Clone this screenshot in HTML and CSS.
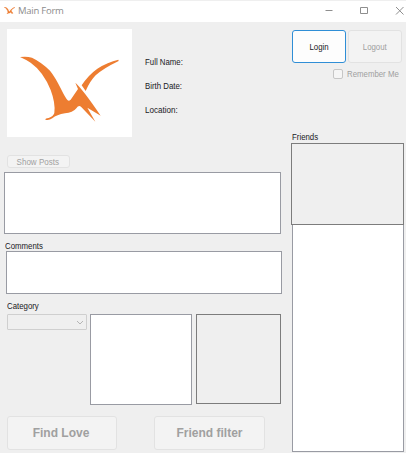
FILE: index.html
```
<!DOCTYPE html>
<html lang="en">
<head>
<meta charset="utf-8">
<title>Main Form</title>
<link rel="stylesheet" href="styles.css">
</head>
<body>
<header class="titlebar">
  <svg class="app-icon" viewBox="58 168 300 200" preserveAspectRatio="none"><path d="M60 171Q80 168 96 173Q125 187 150 212Q166 232 182 265Q196 294 203 301Q207 304 212 299L234 267L226 248Q250 270 302 347L262 323L286 365L243 320Q236 314 229 325Q218 339 195 340Q170 344 157 355Q146 363 136 359Q136 355 146 354Q160 349 163 339Q167 310 152 270Q130 215 92 188Q76 178 60 171ZM245 256Q265 225 292 206Q323 186 355 179L356 183Q310 205 287 226Q270 243 257 273Z"/></svg>
  <h1>Main Form</h1>
  <svg class="controls" viewBox="0 0 82 18"><path d="M2.500 7.500H9.500M37.500 4.500H44.500V10.500H37.500ZM73 4L80.500 11.500M80.500 4L73 11.500"/></svg>
</header>
<main class="form">
  <section class="left">
    <div class="profile">
      <div class="photo"><svg viewBox="21 87 375 324"><path d="M60 171Q80 168 96 173Q125 187 150 212Q166 232 182 265Q196 294 203 301Q207 304 212 299L234 267L226 248Q250 270 302 347L262 323L286 365L243 320Q236 314 229 325Q218 339 195 340Q170 344 157 355Q146 363 136 359Q136 355 146 354Q160 349 163 339Q167 310 152 270Q130 215 92 188Q76 178 60 171ZM245 256Q265 225 292 206Q323 186 355 179L356 183Q310 205 287 226Q270 243 257 273Z"/></svg></div>
      <div class="details"><span class="t">Full Name:</span><span class="t">Birth Date:</span><span class="t">Location:</span></div>
    </div>
    <button class="btn show" disabled><span class="t">Show Posts</span></button>
    <div class="list posts"></div>
    <label class="comments-label"><span class="t">Comments</span></label>
    <div class="list comments"></div>
    <label class="category-label"><span class="t">Category</span></label>
    <div class="category">
      <div class="combo"><svg viewBox="0 0 8 5"><path d="M1 1L4 4L7 1"/></svg></div>
      <div class="list items"></div>
      <div class="picture item-picture"></div>
    </div>
    <div class="actions"><button class="btn big" disabled>Find Love</button><button class="btn big filter" disabled>Friend filter</button></div>
  </section>
  <aside class="right">
    <div class="session"><button class="btn login"><span class="t">Login</span></button><button class="btn logout" disabled><span class="t">Logout</span></button></div>
    <div class="remember"><span class="check"></span><span class="t">Remember Me</span></div>
    <label class="friends-label"><span class="t">Friends</span></label>
    <div class="picture friend-picture"></div>
    <div class="list friends"></div>
  </aside>
</main>
</body>
</html>
```
FILE: styles.css
```
* { box-sizing: border-box; }
body {
  margin: 0;
  width: 406px;
  height: 453px;
  overflow: hidden;
  background: #efefef;
  color: #202024;
  font: 9px/12px "Liberation Sans", Arial, sans-serif;
}
.titlebar {
  display: flex;
  align-items: center;
  height: 22px;
  padding-left: 4px;
  background: #fff;
  border-top: 1px solid #efefef;
}
.app-icon { width: 11px; height: 7px; margin-top: -2px; fill: #ed7d31; stroke: #ed7d31; stroke-width: 12; }
h1 {
  margin: -2px 0 0 3px;
  font: 9.5px/14px "Open Sans", sans-serif;
  letter-spacing: -.25px;
  color: #8c8c8c;
}
.controls {
  width: 82px;
  height: 18px;
  margin-left: auto;
  margin-right: 1px;
  fill: none;
  stroke: #8e8e8e;
  stroke-width: 1;
}
.form { display: flex; }
.left { width: 283px; padding: 7px 0 0 4px; }
.right { width: 115px; margin-left: 8px; padding-top: 8px; }
.t {
  display: inline-block;
  white-space: nowrap;
  transform: scaleX(.87);
  transform-origin: left center;
}
.profile { display: flex; margin-left: 3px; height: 108px; }
.photo { width: 125px; height: 108px; background: #fff; }
.photo svg { display: block; width: 125px; height: 108px; fill: #ed7d31; }
.details {
  display: flex;
  flex-direction: column;
  gap: 12px;
  margin: 27px 0 0 13px;
}
.details .t:last-child { transform: scaleX(.9); }
.btn {
  display: flex;
  align-items: center;
  justify-content: center;
  padding: 0;
  border: 1px solid #e2e2e2;
  border-radius: 3px;
  background: #f3f3f3;
  color: #a0a0a0;
  font: inherit;
}
.btn .t { transform-origin: center; }
.show { width: 63px; height: 13px; margin: 18px 0 0 3px; padding-right: 2px; }
.show .t { transform: scaleX(.89); }
.list { border: 1px solid #999ba3; background: #fff; }
.posts { width: 277px; height: 62px; margin-top: 4px; }
label { display: block; height: 12px; }
.comments-label { margin: 6px 0 0 1px; }
.comments { width: 276px; height: 43px; margin: -1px 0 0 2px; }
.category-label { margin: 6px 0 0 3px; }
.category { display: flex; margin: 2px 0 0 3px; }
.combo {
  display: flex;
  align-items: center;
  justify-content: flex-end;
  width: 80px;
  height: 16px;
  padding-right: 2px;
  border: 1px solid #cfcfcf;
  border-radius: 1px;
}
.combo svg { width: 8px; height: 5px; fill: none; stroke: #b5b5b5; }
.items { width: 102px; height: 91px; margin-left: 3px; }
.picture { border: 1px solid #7c7c7c; background: #efefef; }
.item-picture { width: 85px; height: 90px; margin-left: 4px; }
.actions { display: flex; gap: 37px; margin: 11px 0 0 3px; }
.big {
  width: 110px;
  height: 34px;
  padding-right: 2px;
  font-weight: bold;
  font-size: 12px;
}
.filter { width: 111px; padding-right: 0; }
.session { display: flex; gap: 2px; margin-left: 1px; }
.session .btn { width: 54px; height: 33px; }
.session .login { border-color: #2f8ed6; background: #fdfdfd; color: #202024; }
.remember { display: flex; align-items: center; height: 12px; margin: 5px 0 0 42px; color: #a0a0a0; }
.check {
  flex: none;
  width: 10px;
  height: 10px;
  margin-right: 4px;
  border: 1px solid #c6c6c6;
  border-radius: 2px;
  background: #f5f5f5;
}
.friends-label { margin: 51px 0 0 1px; }
.friend-picture { width: 113px; height: 82px; }
.friends { width: 112px; height: 227px; margin-left: 1px; border-top: 0; }
```
